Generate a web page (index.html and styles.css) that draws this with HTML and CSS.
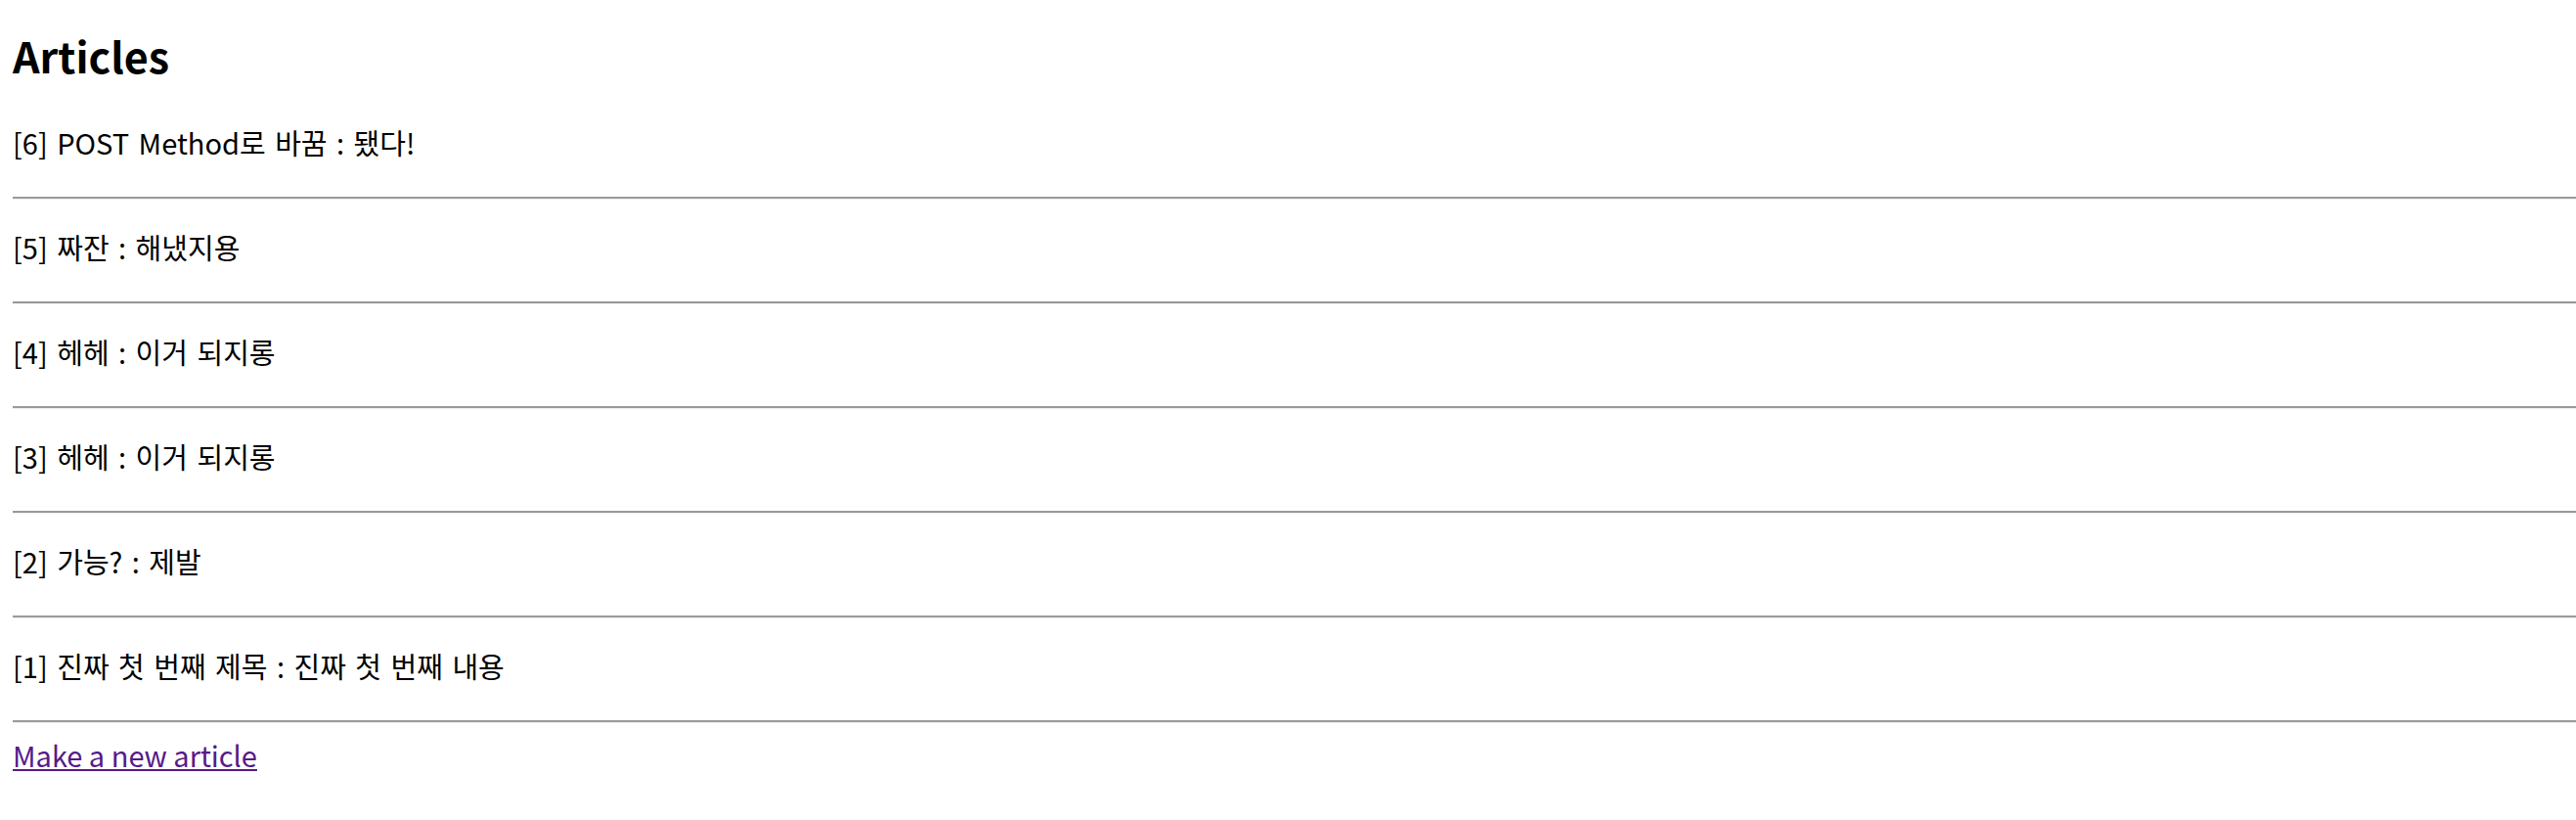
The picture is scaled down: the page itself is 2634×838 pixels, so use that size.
FILE: index.html
```html
<!DOCTYPE html>
<html>

<head>
    <title>Articles</title>
    <link rel="stylesheet" href="styles.css">
</head>

<body>
    <h1 class="page-title">Articles</h1>

    <div class="article-list">
        <div class="article">
            <p class="article-text">[6] POST Method로 바꿈 : 됐다!</p>
            <hr class="divider">
        </div>
        <div class="article">
            <p class="article-text">[5] 짜잔 : 해냈지용</p>
            <hr class="divider">
        </div>
        <div class="article">
            <p class="article-text">[4] 헤헤 : 이거 되지롱</p>
            <hr class="divider">
        </div>
        <div class="article">
            <p class="article-text">[3] 헤헤 : 이거 되지롱</p>
            <hr class="divider">
        </div>
        <div class="article">
            <p class="article-text">[2] 가능? : 제발</p>
            <hr class="divider">
        </div>
        <div class="article">
            <p class="article-text">[1] 진짜 첫 번째 제목 : 진짜 첫 번째 내용</p>
            <hr class="divider">
        </div>
    </div>

    <a class="new-link" href="#">Make a new article</a>
</body>

</html>
```

FILE: styles.css
```css
body {
    margin: 0;
    padding: 25px 0 0 13px;
    font-family: "Noto Sans CJK KR", sans-serif;
    font-size: 29px;
    color: #000;
    background-color: #fff;
}

.page-title {
    margin: 0;
    font-size: 43px;
    font-weight: bold;
    line-height: normal;
}

.article-list {
    margin-top: 10px;
    display: flex;
    flex-direction: column;
}

.article-text {
    margin: 0;
    padding-top: 27px;
    padding-bottom: 35px;
    line-height: normal;
    word-spacing: 3px;
}

.divider {
    margin: 0;
    height: 0;
    border: none;
    border-top: 2px solid #9a9a9a;
    border-bottom: 1px solid #eeeeee;
}

.new-link {
    display: inline-block;
    margin-top: 11px;
    color: #551a8b;
    line-height: normal;
}
```
